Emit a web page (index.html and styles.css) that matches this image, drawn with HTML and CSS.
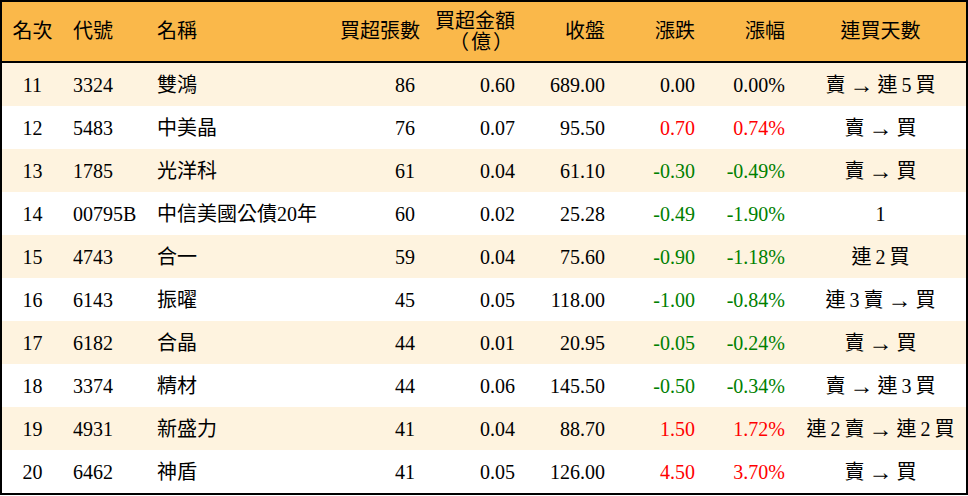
FILE: index.html
```html
<!DOCTYPE html>
<html lang="zh-Hant">
<head>
<meta charset="utf-8">
<title>買超排行</title>
<link rel="stylesheet" href="styles.css">
</head>
<body>
<div class="frame">
<table class="rank">
  <colgroup>
    <col class="c-rank"><col class="c-code"><col class="c-name"><col class="c-vol"><col class="c-amt"><col class="c-close"><col class="c-chg"><col class="c-pct"><col class="c-days">
  </colgroup>
  <thead>
    <tr>
      <th class="ctr">名次</th>
      <th class="lft">代號</th>
      <th class="lft">名稱</th>
      <th class="rgt">買超張數</th>
      <th class="rgt">買超金額<br><span class="unit">（億）</span></th>
      <th class="rgt">收盤</th>
      <th class="rgt">漲跌</th>
      <th class="rgt">漲幅</th>
      <th class="ctr">連買天數</th>
    </tr>
  </thead>
  <tbody>
    <tr class="alt"><td class="ctr">11</td><td class="lft">3324</td><td class="lft">雙鴻</td><td class="rgt">86</td><td class="rgt">0.60</td><td class="rgt">689.00</td><td class="rgt">0.00</td><td class="rgt">0.00%</td><td class="ctr days">賣 <span class="arr">→</span> 連 5 買</td></tr>
    <tr><td class="ctr">12</td><td class="lft">5483</td><td class="lft">中美晶</td><td class="rgt">76</td><td class="rgt">0.07</td><td class="rgt">95.50</td><td class="rgt up">0.70</td><td class="rgt up">0.74%</td><td class="ctr days">賣 <span class="arr">→</span> 買</td></tr>
    <tr class="alt"><td class="ctr">13</td><td class="lft">1785</td><td class="lft">光洋科</td><td class="rgt">61</td><td class="rgt">0.04</td><td class="rgt">61.10</td><td class="rgt dn">-0.30</td><td class="rgt dn">-0.49%</td><td class="ctr days">賣 <span class="arr">→</span> 買</td></tr>
    <tr><td class="ctr">14</td><td class="lft">00795B</td><td class="lft">中信美國公債20年</td><td class="rgt">60</td><td class="rgt">0.02</td><td class="rgt">25.28</td><td class="rgt dn">-0.49</td><td class="rgt dn">-1.90%</td><td class="ctr days">1</td></tr>
    <tr class="alt"><td class="ctr">15</td><td class="lft">4743</td><td class="lft">合一</td><td class="rgt">59</td><td class="rgt">0.04</td><td class="rgt">75.60</td><td class="rgt dn">-0.90</td><td class="rgt dn">-1.18%</td><td class="ctr days">連 2 買</td></tr>
    <tr><td class="ctr">16</td><td class="lft">6143</td><td class="lft">振曜</td><td class="rgt">45</td><td class="rgt">0.05</td><td class="rgt">118.00</td><td class="rgt dn">-1.00</td><td class="rgt dn">-0.84%</td><td class="ctr days">連 3 賣 <span class="arr">→</span> 買</td></tr>
    <tr class="alt"><td class="ctr">17</td><td class="lft">6182</td><td class="lft">合晶</td><td class="rgt">44</td><td class="rgt">0.01</td><td class="rgt">20.95</td><td class="rgt dn">-0.05</td><td class="rgt dn">-0.24%</td><td class="ctr days">賣 <span class="arr">→</span> 買</td></tr>
    <tr><td class="ctr">18</td><td class="lft">3374</td><td class="lft">精材</td><td class="rgt">44</td><td class="rgt">0.06</td><td class="rgt">145.50</td><td class="rgt dn">-0.50</td><td class="rgt dn">-0.34%</td><td class="ctr days">賣 <span class="arr">→</span> 連 3 買</td></tr>
    <tr class="alt"><td class="ctr">19</td><td class="lft">4931</td><td class="lft">新盛力</td><td class="rgt">41</td><td class="rgt">0.04</td><td class="rgt">88.70</td><td class="rgt up">1.50</td><td class="rgt up">1.72%</td><td class="ctr days">連 2 賣 <span class="arr">→</span> 連 2 買</td></tr>
    <tr><td class="ctr">20</td><td class="lft">6462</td><td class="lft">神盾</td><td class="rgt">41</td><td class="rgt">0.05</td><td class="rgt">126.00</td><td class="rgt up">4.50</td><td class="rgt up">3.70%</td><td class="ctr days">賣 <span class="arr">→</span> 買</td></tr>
  </tbody>
</table>
</div>
</body>
</html>
```
FILE: styles.css
```css
html, body {
  margin: 0;
  padding: 0;
  background: #ffffff;
}

.frame {
  width: 968px;
  box-sizing: border-box;
  border: 2px solid #000000;
}

.rank {
  width: 964px;
  table-layout: fixed;
  border-collapse: separate;
  border-spacing: 0;
  font-family: "Liberation Serif", "Noto Sans CJK TC", serif;
  font-size: 20px;
  color: #000000;
}

.c-rank { width: 61px; }
.c-code { width: 84px; }
.c-name { width: 183px; }
.c-vol { width: 95px; }
.c-amt { width: 100px; }
.c-close { width: 90px; }
.c-chg { width: 90px; }
.c-pct { width: 90px; }
.c-days { width: 171px; }

.rank th {
  background: #fab84a;
  height: 59px;
  padding: 0 10px;
  font-weight: normal;
  line-height: 21px;
  border-bottom: 2px solid #000000;
  white-space: nowrap;
}

.rank th .unit {
  letter-spacing: 2px;
}

.rank td {
  height: 43px;
  padding: 0 10px;
  line-height: 24px;
  white-space: nowrap;
}

.rank tr.alt td {
  background: #fef3df;
}

.rank td.days {
  word-spacing: -1px;
}

.arr {
  font-size: 24px;
  line-height: 0;
  vertical-align: -1px;
  word-spacing: 0;
}

.ctr { text-align: center; }
.lft { text-align: left; }
.rgt { text-align: right; }

.up { color: #ff0000; }
.dn { color: #008000; }
```
